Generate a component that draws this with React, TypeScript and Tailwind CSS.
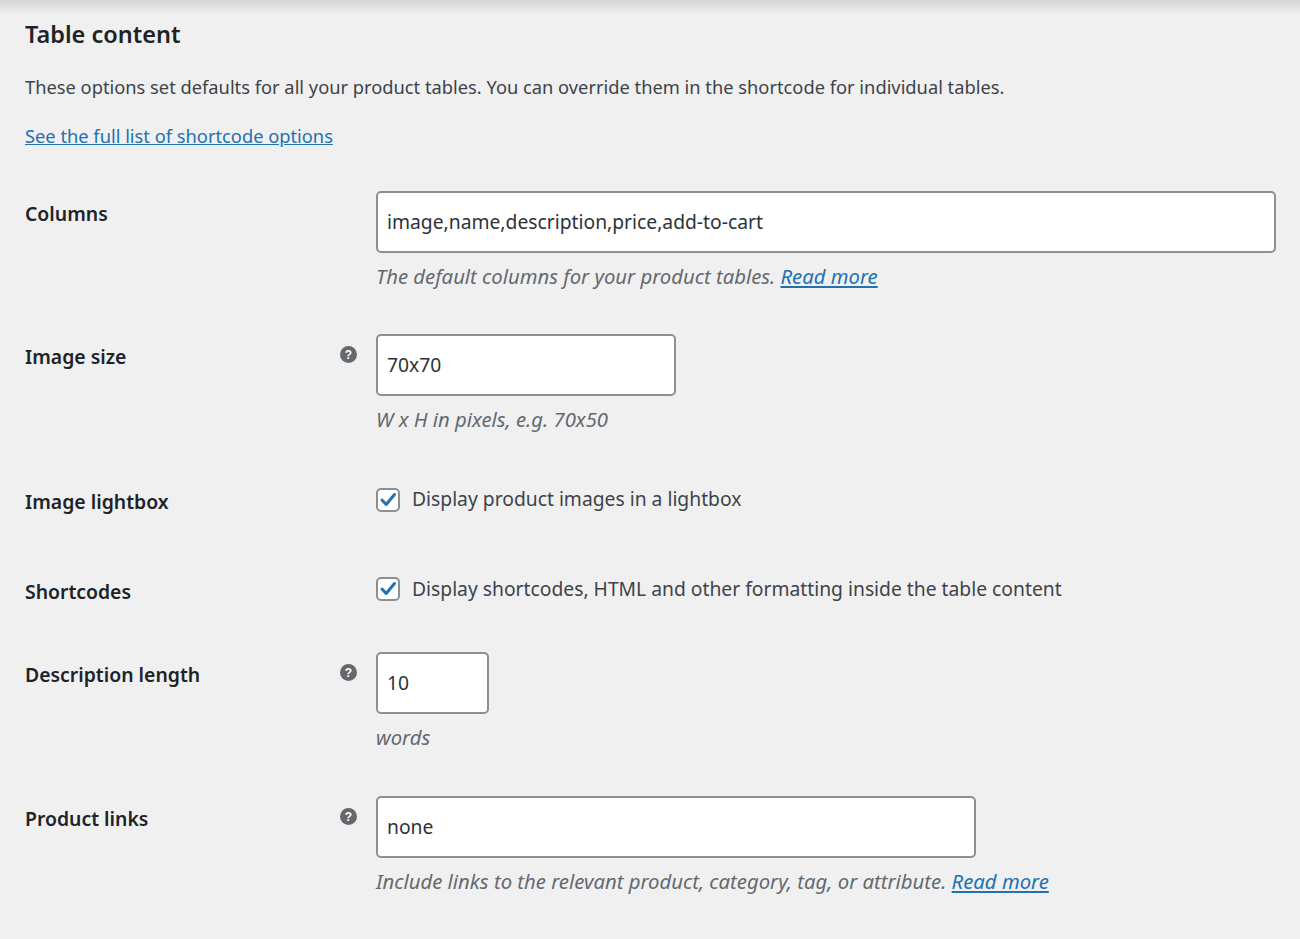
import React from 'react';

const font = { fontFamily: '"Noto Sans", "Open Sans", sans-serif' };

const Help = () => (
  <svg width="17" height="17" viewBox="0 0 20 20" className="absolute right-[19px] top-[12px]">
    <circle cx="10" cy="10" r="10" fill="#646970" />
    <text x="10" y="15" textAnchor="middle" fontSize="14" fontWeight="700" fill="#fff" fontFamily="Liberation Sans, sans-serif">?</text>
  </svg>
);

const Check = () => (
  <span className="flex h-[24px] w-[24px] shrink-0 items-center justify-center rounded-[5px] border-2 border-[#8c8f94] bg-white">
    <svg width="20" height="20" viewBox="0 0 20 20">
      <path d="M4 10l4.2 4.5L16.5 4.5" fill="none" stroke="#2271b1" strokeWidth="3" strokeLinecap="round" strokeLinejoin="round" />
    </svg>
  </span>
);

function Row({ label, help, children, className, check }: { label: string; help?: boolean; children: React.ReactNode; className?: string; check?: boolean }) {
  return (
    <div className={`flex items-start ${className ?? ''}`}>
      <div className={`relative w-[351px] shrink-0 text-[19.4px] font-semibold text-[#1d2327] ${check ? 'pt-[3px]' : 'pt-[8px]'}`}>
        {label}
        {help && <Help />}
      </div>
      <div className="flex-1">{children}</div>
    </div>
  );
}

const Input = ({ value, w }: { value: string; w: string }) => (
  <div className={`flex h-[62px] items-center rounded-[5px] border-2 border-[#8c8f94] bg-white px-[9px] text-[19.3px] text-[#2c3338] ${w}`}>
    {value}
  </div>
);

const Desc = ({ children }: { children: React.ReactNode }) => (
  <p className="mt-[10px] text-[20.3px] italic leading-[26px] text-[#646970]">{children}</p>
);

export default function App() {
  return (
    <div className="relative min-h-[939px] w-[1300px] overflow-hidden bg-[#f0f0f1]" style={font}>
      <div className="pointer-events-none absolute inset-x-0 top-0 h-[14px] bg-gradient-to-b from-[#d4d4d6] to-transparent" />
      <div className="px-[25px] pt-[17px]">
        <h2 className="text-[23.5px] font-semibold leading-[34px] text-[#1d2327]">Table content</h2>
        <p className="mt-[23px] text-[18.3px] leading-[26px] text-[#3c434a]">
          These options set defaults for all your product tables. You can override them in the shortcode for individual tables.
        </p>
        <p className="mt-[23px] text-[18.3px] leading-[26px]">
          <a className="text-[#2271b1] underline">See the full list of shortcode options</a>
        </p>

        <Row label="Columns" className="mt-[42px]">
          <Input value="image,name,description,price,add-to-cart" w="w-[900px]" />
          <Desc>
            The default columns for your product tables. <a className="text-[#2271b1] underline">Read more</a>
          </Desc>
        </Row>

        <Row label="Image size" help className="mt-[45px]">
          <Input value="70x70" w="w-[300px]" />
          <Desc>W x H in pixels, e.g. 70x50</Desc>
        </Row>

        <Row label="Image lightbox" check className="mt-[52px]">
          <div className="flex h-[30px] items-center gap-[12px] pt-[1px] text-[19.3px] text-[#3c434a]">
            <Check />
            Display product images in a lightbox
          </div>
        </Row>

        <Row label="Shortcodes" check className="mt-[58px]">
          <div className="flex h-[30px] items-center gap-[12px] text-[19.3px] text-[#3c434a]">
            <Check />
            Display shortcodes, HTML and other formatting inside the table content
          </div>
        </Row>

        <Row label="Description length" help className="mt-[46px]">
          <Input value="10" w="w-[113px]" />
          <Desc>words</Desc>
        </Row>

        <Row label="Product links" help className="mt-[46px]">
          <Input value="none" w="w-[600px]" />
          <Desc>
            Include links to the relevant product, category, tag, or attribute. <a className="text-[#2271b1] underline">Read more</a>
          </Desc>
        </Row>
      </div>
    </div>
  );
}
